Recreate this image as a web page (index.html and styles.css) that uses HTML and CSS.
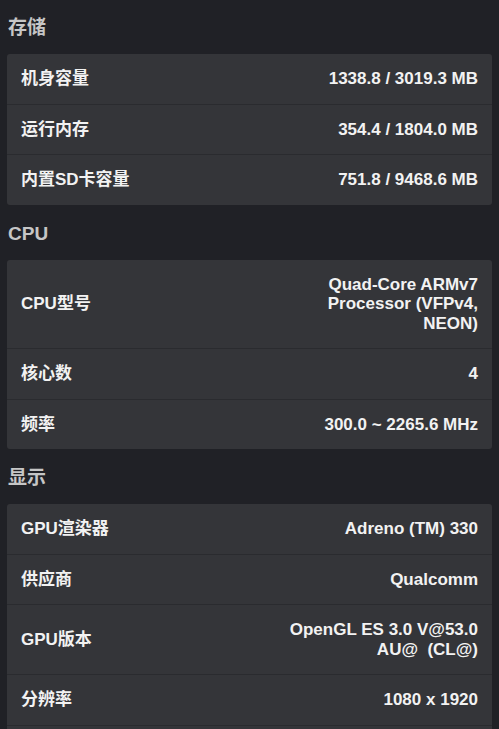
FILE: index.html
```html
<!DOCTYPE html>
<html lang="zh-CN">
<head>
<meta charset="utf-8">
<title>设备信息</title>
<link rel="stylesheet" href="styles.css">
</head>
<body>
<div class="page">
  <h2 class="section-title">存储</h2>
  <div class="card">
    <div class="row"><span class="label">机身容量</span><span class="value">1338.8 / 3019.3 MB</span></div>
    <div class="row"><span class="label">运行内存</span><span class="value">354.4 / 1804.0 MB</span></div>
    <div class="row"><span class="label">内置SD卡容量</span><span class="value">751.8 / 9468.6 MB</span></div>
  </div>

  <h2 class="section-title">CPU</h2>
  <div class="card">
    <div class="row"><span class="label">CPU型号</span><span class="value">Quad-Core ARMv7 Processor (VFPv4, NEON)</span></div>
    <div class="row"><span class="label">核心数</span><span class="value">4</span></div>
    <div class="row"><span class="label">频率</span><span class="value">300.0 ~ 2265.6 MHz</span></div>
  </div>

  <h2 class="section-title">显示</h2>
  <div class="card">
    <div class="row"><span class="label">GPU渲染器</span><span class="value">Adreno (TM) 330</span></div>
    <div class="row"><span class="label">供应商</span><span class="value">Qualcomm</span></div>
    <div class="row"><span class="label">GPU版本</span><span class="value">OpenGL ES 3.0 V@53.0 AU@&nbsp; (CL@)</span></div>
    <div class="row"><span class="label">分辨率</span><span class="value">1080 x 1920</span></div>
    <div class="row row-empty"></div>
  </div>
</div>
</body>
</html>
```

FILE: styles.css
```css
html, body {
  margin: 0;
  padding: 0;
}

body {
  background: #202126;
  font-family: "Liberation Sans", "Noto Sans CJK SC", sans-serif;
  font-weight: bold;
  color: #f2f2f2;
  overflow: hidden;
}

.page {
  display: flex;
  flex-direction: column;
}

.section-title {
  margin: 0;
  height: 54px;
  line-height: 55px;
  padding-left: 8px;
  font-size: 19px;
  font-weight: bold;
  color: #c6c6c6;
}

.card {
  margin: 0 7px 1px 7px;
  background: #343539;
  border-radius: 3px;
  display: flex;
  flex-direction: column;
}

.row {
  display: flex;
  align-items: center;
  justify-content: space-between;
  padding: 15px 14px;
  font-size: 17px;
  line-height: 19.5px;
  border-bottom: 1px solid #2a2b2f;
}

.row:last-child {
  border-bottom: none;
}

.row-empty {
  height: 19.5px;
}

.label {
  flex: none;
  white-space: nowrap;
}

.value {
  max-width: 200px;
  text-align: right;
}
```
